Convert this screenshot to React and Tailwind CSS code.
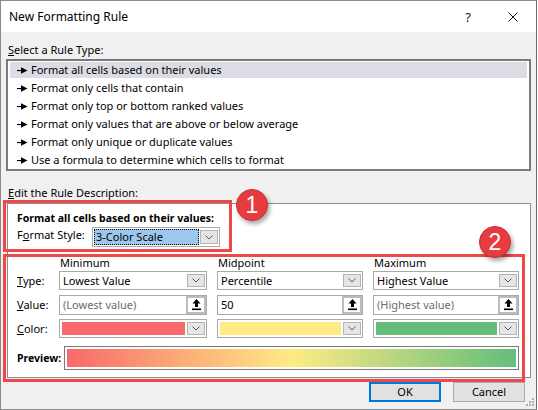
import React from 'react';

function Chevron() {
  return (
    <svg width="8" height="5" viewBox="0 0 8 5">
      <path d="M0.5 0.5 L4 4 L7.5 0.5" fill="none" stroke="#5a5a5a" strokeWidth="1" />
    </svg>
  );
}

function DropBtn() {
  return (
    <div className="w-[18px] self-stretch my-[2px] mr-[1px] bg-[#e5e5e5] border border-[#b4b4b4] flex items-center justify-center">
      <Chevron />
    </div>
  );
}

function Dropdown({ text }) {
  return (
    <div className="h-[19px] border border-[#a9a9a9] bg-white flex items-stretch">
      <span className="flex-1 pl-[3px] flex items-center">{text}</span>
      <DropBtn />
    </div>
  );
}

function UploadIcon() {
  return (
    <svg width="9" height="12" viewBox="0 0 9 12">
      <polygon points="4.5,0 0.5,4.5 3,4.5 3,8 6,8 6,4.5 8.5,4.5" fill="#000" />
      <rect x="0" y="9.5" width="9" height="1.6" fill="#000" />
    </svg>
  );
}

function ValueInput({ text, placeholder }) {
  return (
    <div className="h-[20px] border border-[#a9a9a9] bg-white flex items-stretch">
      <span className={`flex-1 pl-[3px] flex items-center ${placeholder ? 'text-[#6d6d6d]' : ''}`}>{text}</span>
      <div className="w-[20px] border-2 border-[#bcbcbc] bg-white flex items-center justify-center">
        <UploadIcon />
      </div>
    </div>
  );
}

function ColorPick({ color }) {
  return (
    <div className="h-[19px] border border-[#a9a9a9] bg-white flex items-stretch">
      <div className="flex-1 my-[2px] mx-[2px]" style={{ background: color }}></div>
      <DropBtn />
    </div>
  );
}

function ListArrow() {
  return (
    <svg width="11" height="7" viewBox="0 0 11 7" className="mr-[3px]">
      <rect x="0" y="3" width="5" height="1.1" fill="#000" />
      <polygon points="4,0.3 10.5,3.5 4,6.7" fill="#000" />
    </svg>
  );
}

function Badge({ n, className }) {
  return (
    <div className={`absolute w-[32px] h-[32px] rounded-full bg-[#e63b3f] border border-[#c92e33] shadow-[2px_3px_4px_rgba(0,0,0,0.35)] flex items-center justify-center text-white text-[23px] font-['Liberation_Sans',sans-serif] ${className}`}>
      {n}
    </div>
  );
}

export default function App() {
  const rules = [
    'Format all cells based on their values',
    'Format only cells that contain',
    'Format only top or bottom ranked values',
    'Format only values that are above or below average',
    'Format only unique or duplicate values',
    'Use a formula to determine which cells to format',
  ];

  return (
    <div className="relative w-[537px] h-[410px] bg-[#f0f0f0] border border-[#8a8a8a] border-r-[#6b6b6b] overflow-hidden text-[11px] leading-[16px] text-black font-['Noto_Sans',sans-serif]">
      {/* title bar */}
      <div className="h-[31px] bg-white flex items-center pl-[8px] text-[12px]">
        <span>New Formatting Rule</span>
        <span className="ml-auto text-[13px] text-[#222]">?</span>
        <svg width="10" height="10" viewBox="0 0 10 10" className="ml-[37px] mr-[18px]">
          <path d="M0.5 0.5 L9.5 9.5 M9.5 0.5 L0.5 9.5" stroke="#111" strokeWidth="1" />
        </svg>
      </div>

      <div className="pl-[5px] pr-[5px]">
        <div className="mt-[10px] pl-[2px]"><u>S</u>elect a Rule Type:</div>
        <div className="mt-[1px] border-2 border-[#7a7a7a] bg-white h-[112px] px-[2px]">
          {rules.map((r, i) => (
            <div key={r} className="h-[18px] flex items-center">
              <div className={`h-[16px] w-full flex items-center pl-[7px] ${i === 0 ? 'bg-[#dcdce4]' : ''}`}>
                <ListArrow />
                <span>{r}</span>
              </div>
            </div>
          ))}
        </div>

        <div className="mt-[14px] pl-[2px]"><u>E</u>dit the Rule Description:</div>
        <div className="mt-[2px] ml-[1px] border border-[#8c8c94] bg-white h-[175px] pt-[6px] pl-[9px]">
          <div className="font-bold text-[10.5px]">Format all cells based on their values:</div>
          <div className="flex items-start mt-[1px]">
            <span className="w-[75px]">F<u>o</u>rmat Style:</span>
            <div className="w-[128px] h-[20px] border border-[#a9a9a9] bg-white flex items-stretch">
              <div className="w-[107px] m-[1px] bg-[#9dc8ee] border border-dotted border-black flex items-center pl-[1px]">3-Color Scale</div>
              <DropBtn />
            </div>
          </div>

          <div className="grid grid-cols-[32px_148px_146px_146px] gap-x-[10px] mt-[8px] items-center">
            <div></div>
            <div className="pl-[1px] h-[16px]">Minimum</div>
            <div className="pl-[1px] h-[16px]">Midpoint</div>
            <div className="pl-[1px] h-[16px]">Maximum</div>

            <div><u>T</u>ype:</div>
            <Dropdown text="Lowest Value" />
            <Dropdown text="Percentile" />
            <Dropdown text="Highest Value" />

            <div className="mt-[5px]"><u>V</u>alue:</div>
            <div className="mt-[5px]"><ValueInput text="(Lowest value)" placeholder /></div>
            <div className="mt-[5px]"><ValueInput text="50" /></div>
            <div className="mt-[5px]"><ValueInput text="(Highest value)" placeholder /></div>

            <div className="mt-[4px]"><u>C</u>olor:</div>
            <div className="mt-[4px]"><ColorPick color="#f8696b" /></div>
            <div className="mt-[4px]"><ColorPick color="#ffeb84" /></div>
            <div className="mt-[4px]"><ColorPick color="#63be7b" /></div>
          </div>

          <div className="flex items-center mt-[8px]">
            <span className="w-[47px] font-bold text-[10.5px] whitespace-nowrap">Preview:</span>
            <div className="w-[455px] h-[24px] border border-[#7a7a7a] bg-white p-[2px]">
              <div className="w-full h-full bg-[linear-gradient(to_right,#f8696b,#ffeb84,#63be7b)]"></div>
            </div>
          </div>
        </div>

        <div className="flex justify-end gap-[12px] mt-[4px] pr-[6px]">
          <button className="w-[72px] h-[20px] bg-[#e1e1e1] border-2 border-[#0078d7] flex items-center justify-center">OK</button>
          <button className="w-[72px] h-[20px] bg-[#e1e1e1] border border-[#adadad] flex items-center justify-center">Cancel</button>
        </div>
      </div>

      {/* size grip */}
      <svg width="10" height="10" viewBox="0 0 10 10" className="absolute right-[1px] bottom-[2px]">
        <rect x="7" y="1" width="2" height="2" fill="#b0b0b0" />
        <rect x="4" y="4" width="2" height="2" fill="#b0b0b0" />
        <rect x="7" y="4" width="2" height="2" fill="#b0b0b0" />
        <rect x="1" y="7" width="2" height="2" fill="#b0b0b0" />
        <rect x="4" y="7" width="2" height="2" fill="#b0b0b0" />
        <rect x="7" y="7" width="2" height="2" fill="#b0b0b0" />
      </svg>

      {/* annotations */}
      <div className="absolute left-[2px] top-[199px] w-[229px] h-[52px] border-[3px] border-[#f04848]"></div>
      <div className="absolute left-[2px] top-[253px] w-[522px] h-[128px] border-[3px] border-[#f04848]"></div>
      <Badge n="1" className="left-[235px] top-[188px]" />
      <Badge n="2" className="left-[478px] top-[225px]" />
    </div>
  );
}
